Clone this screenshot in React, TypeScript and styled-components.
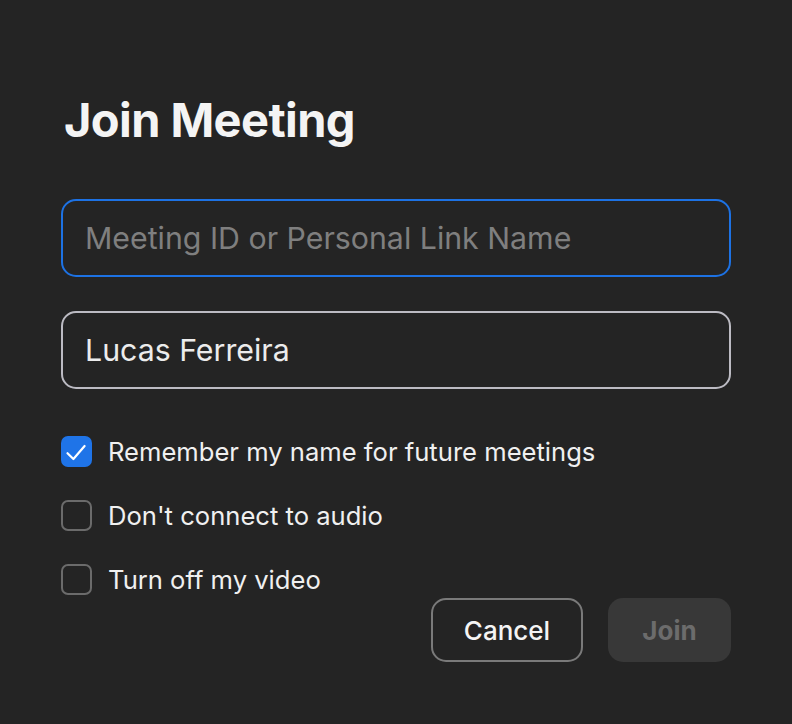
import React, { useState } from 'react';
import styled, { createGlobalStyle } from 'styled-components';

const GlobalStyle = createGlobalStyle`
	html, body {
		margin: 0;
		padding: 0;
		background: #242424;
	}
	* {
		box-sizing: border-box;
	}
`;

function App() {
	const [remember, setRemember] = useState(true);
	const [noAudio, setNoAudio] = useState(false);
	const [noVideo, setNoVideo] = useState(false);

	return (
		<>
			<GlobalStyle />
			<Window>
				<Title>Join Meeting</Title>
				<Field focused placeholder="Meeting ID or Personal Link Name" />
				<Field defaultValue="Lucas Ferreira" />
				<Options>
					<Option checked={remember} onToggle={() => setRemember(!remember)}>
						Remember my name for future meetings
					</Option>
					<Option checked={noAudio} onToggle={() => setNoAudio(!noAudio)}>
						Don't connect to audio
					</Option>
					<Option checked={noVideo} onToggle={() => setNoVideo(!noVideo)}>
						Turn off my video
					</Option>
				</Options>
				<Actions>
					<CancelButton>Cancel</CancelButton>
					<JoinButton disabled>Join</JoinButton>
				</Actions>
			</Window>
		</>
	);
}

interface OptionProps {
	checked: boolean;
	onToggle: () => void;
	children: React.ReactNode;
}
function Option({ checked, onToggle, children }: OptionProps) {
	return (
		<Row onClick={onToggle}>
			<Box checked={checked}>
				{checked && (
					<svg width="31" height="31" viewBox="0 0 31 31" fill="none">
						<path
							d="M6.5 17.2 L12.4 23 L23.6 10"
							stroke="#ffffff"
							strokeWidth="2.2"
							strokeLinecap="round"
							strokeLinejoin="round"
						/>
					</svg>
				)}
			</Box>
			<Label>{children}</Label>
		</Row>
	);
}

const Window = styled.div`
	width: 792px;
	height: 724px;
	background: #242424;
	padding: 0 61px;
	display: flex;
	flex-direction: column;
	font-family: Inter, 'Noto Sans', sans-serif;
	overflow: hidden;
`;

const Title = styled.h1`
	margin: 92px 0 0 3px;
	font-size: 47px;
	line-height: 56px;
	font-weight: 700;
	color: #f4f4f4;
	letter-spacing: -0.6px;
`;

const Field = styled.input<{ focused?: boolean }>`
	height: 78px;
	width: 100%;
	margin-top: ${(p) => (p.focused ? '51px' : '34px')};
	padding: 0 22px;
	background: transparent;
	border: 2px solid ${(p) => (p.focused ? '#1d72e4' : '#bcbbc3')};
	border-radius: 15px;
	outline: none;
	font-family: Inter, 'Noto Sans', sans-serif;
	font-size: 30.3px;
	color: #ececec;
	&::placeholder {
		color: #7f7f7f;
	}
`;

const Options = styled.div`
	margin-top: 47px;
	display: flex;
	flex-direction: column;
	gap: 33px;
`;

const Row = styled.div`
	display: flex;
	align-items: center;
	gap: 16px;
	cursor: pointer;
	height: 31px;
`;

const Box = styled.div<{ checked: boolean }>`
	width: 31px;
	height: 31px;
	flex-shrink: 0;
	border-radius: 7px;
	background: ${(p) => (p.checked ? '#1f74e8' : 'transparent')};
	border: ${(p) => (p.checked ? 'none' : '2px solid #6b6b6b')};
	display: flex;
	align-items: center;
	justify-content: center;
`;

const Label = styled.span`
	font-size: 25.6px;
	color: #f0f0f0;
	white-space: nowrap;
`;

const Actions = styled.div`
	margin-top: 3px;
	display: flex;
	justify-content: flex-end;
	gap: 25px;
`;

const CancelButton = styled.button`
	width: 152px;
	height: 64px;
	border: 2px solid #7a7a7a;
	border-radius: 15px;
	background: transparent;
	color: #f4f4f4;
	font-family: Inter, 'Noto Sans', sans-serif;
	font-size: 26px;
	font-weight: 500;
	cursor: pointer;
`;

const JoinButton = styled.button`
	width: 123px;
	height: 64px;
	border: none;
	border-radius: 15px;
	background: #383838;
	color: #6c6c6c;
	font-family: Inter, 'Noto Sans', sans-serif;
	font-size: 26px;
	font-weight: 700;
`;

export default App;
